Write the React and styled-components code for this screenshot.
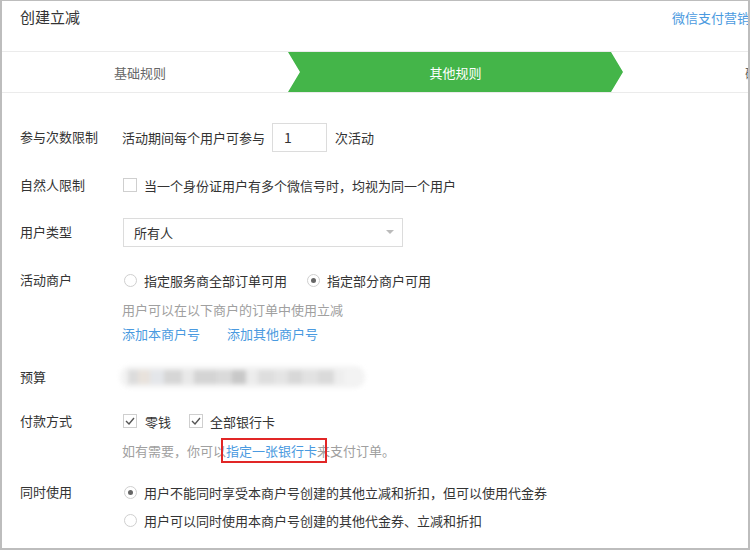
import React from "react";
import styled, { createGlobalStyle } from "styled-components";

const GlobalStyle = createGlobalStyle`
  * { box-sizing: border-box; }
  body {
    margin: 0;
    background: #fff;
    font-family: "Noto Sans CJK SC", "Noto Sans", "Liberation Sans", sans-serif;
    font-size: 13px;
    color: #333;
  }
`;

const Frame = styled.div`
  width: 750px;
  height: 550px;
  overflow: hidden;
  border-top: 1px solid #bdbdbd;
  border-left: 2px solid #bdbdbd;
  border-right: 2px solid #bdbdbd;
  border-bottom: 2px solid #bdbdbd;
  background: #fff;
`;

const Header = styled.div`
  display: grid;
  grid-template-columns: 1fr 76px;
  height: 50px;
  padding: 6px 0 0 18px;
`;

const Title = styled.div`
  font-size: 15px;
  line-height: 20px;
  color: #333;
`;

const HeaderLink = styled.a`
  font-size: 13px;
  line-height: 22px;
  color: #4a9ae0;
  white-space: nowrap;
  overflow: hidden;
  text-decoration: none;
`;

const Steps = styled.div`
  display: flex;
  height: 42px;
  border-top: 1px solid #ebebeb;
  border-bottom: 1px solid #ebebeb;
  overflow: hidden;
`;

const Step = styled.div`
  flex: 0 0 ${(p) => p.$w}px;
  display: flex;
  align-items: center;
  justify-content: center;
  padding-right: ${(p) => p.$pr || 0}px;
  font-size: 13px;
  color: ${(p) => (p.$active ? "#fff" : "#666")};
  background: ${(p) => (p.$active ? "#44b549" : "transparent")};
  clip-path: ${(p) =>
    p.$active
      ? "polygon(0 0, calc(100% - 12px) 0, 100% 50%, calc(100% - 12px) 100%, 0 100%, 12px 50%)"
      : "none"};
  white-space: nowrap;
`;

const Form = styled.div`
  display: flex;
  flex-direction: column;
  padding: 29px 0 0 18px;
`;

const Row = styled.div`
  display: flex;
  align-items: flex-start;
  margin-bottom: ${(p) => p.$mb || 0}px;
`;

const Label = styled.div`
  flex: 0 0 102px;
  line-height: 30px;
  color: #333;
`;

const Body = styled.div`
  display: flex;
  flex-direction: column;
`;

const Line = styled.div`
  display: flex;
  align-items: center;
  height: ${(p) => p.$h || 30}px;
  margin-top: ${(p) => p.$mt || 0}px;
  color: ${(p) => (p.$muted ? "#a0a0a0" : "#333")};
  white-space: nowrap;
`;

const NumInput = styled.div`
  width: 55px;
  height: 29px;
  margin: 0 8px 0 7px;
  border: 1px solid #dcdcdc;
  padding-left: 11px;
  font-size: 14px;
  line-height: 27px;
  color: #333;
`;

const Select = styled.div`
  width: 280px;
  height: 29px;
  margin-left: 1px;
  border: 1px solid #dcdcdc;
  display: flex;
  align-items: center;
  justify-content: space-between;
  padding: 0 8px 0 10px;
  color: #333;
`;

const Caret = styled.span`
  width: 0;
  height: 0;
  border-left: 4px solid transparent;
  border-right: 4px solid transparent;
  border-top: 4px solid #bbb;
`;

const Option = styled.span`
  display: inline-flex;
  align-items: center;
  margin-left: ${(p) => p.$ml || 0}px;
`;

const Box = styled.span`
  width: 14px;
  height: 14px;
  margin: 0 ${(p) => p.$gap || 7}px 0 1px;
  border: 1px solid #cfcfcf;
  background: #fff;
  display: inline-flex;
  align-items: center;
  justify-content: center;
`;

const Radio = styled.span`
  width: 13px;
  height: 13px;
  margin: 0 7px 0 2px;
  border-radius: 50%;
  border: 1px solid #cfcfcf;
  background: #fff;
  display: inline-flex;
  align-items: center;
  justify-content: center;
  &::after {
    content: "";
    width: 5px;
    height: 5px;
    border-radius: 50%;
    background: ${(p) => (p.$on ? "#666" : "transparent")};
  }
`;

const Link = styled.a`
  color: #4a9ae0;
  text-decoration: none;
  margin-right: ${(p) => p.$mr || 0}px;
`;

const Marked = styled.span`
  position: relative;
  color: #4a9ae0;
  &::after {
    content: "";
    position: absolute;
    left: -5px;
    right: -10px;
    top: -3px;
    bottom: -3px;
    border: 2px solid #e12626;
  }
`;

const Blur = styled.div`
  display: flex;
  align-items: center;
  height: 22px;
  margin: 4px 0 0 -2px;
  padding: 0 8px;
  width: 245px;
  background: #f3f3f3;
  border-radius: 10px;
  filter: blur(2px);
`;

const Chip = styled.span`
  height: 14px;
  width: ${(p) => p.$w}px;
  background: ${(p) => p.$c};
`;

const chips = [
  [10, "#dcdcdc"], [12, "#e8e2dc"], [14, "#e4e6ea"], [18, "#d6d6d6"], [12, "#e9e9e9"],
  [22, "#d4d4d4"], [16, "#dadada"], [14, "#c8c8c8"], [12, "#ececec"], [16, "#dedede"],
  [14, "#e4e4e4"], [14, "#d8d8d8"], [16, "#e2e2e2"], [16, "#dadada"], [10, "#eeeeee"],
];

const Check = () => (
  <svg width="10" height="8" viewBox="0 0 10 8">
    <path d="M1 4 L4 7 L9 1" fill="none" stroke="#555" strokeWidth="1.4" />
  </svg>
);

export default function App() {
  return (
    <Frame>
      <GlobalStyle />
      <Header>
        <Title>创建立减</Title>
        <HeaderLink>微信支付营销中心</HeaderLink>
      </Header>
      <Steps>
        <Step $w={286} $pr={10}>基础规则</Step>
        <Step $w={335} $active>其他规则</Step>
        <Step $w={296}>确认信息</Step>
      </Steps>
      <Form>
        <Row $mb={18}>
          <Label>参与次数限制</Label>
          <Line>
            活动期间每个用户可参与
            <NumInput>1</NumInput>
            次活动
          </Line>
        </Row>
        <Row $mb={17}>
          <Label>自然人限制</Label>
          <Line>
            <Option>
              <Box />
              当一个身份证用户有多个微信号时，均视为同一个用户
            </Option>
          </Line>
        </Row>
        <Row $mb={18}>
          <Label>用户类型</Label>
          <Line>
            <Select>
              所有人
              <Caret />
            </Select>
          </Line>
        </Row>
        <Row $mb={17}>
          <Label>活动商户</Label>
          <Body>
            <Line>
              <Option>
                <Radio />
                指定服务商全部订单可用
              </Option>
              <Option $ml={18}>
                <Radio $on />
                指定部分商户可用
              </Option>
            </Line>
            <Line $h={24} $mt={2} $muted>用户可以在以下商户的订单中使用立减</Line>
            <Line $h={24}>
              <Link $mr={27}>添加本商户号</Link>
              <Link>添加其他商户号</Link>
            </Line>
          </Body>
        </Row>
        <Row $mb={14}>
          <Label>预算</Label>
          <Blur>
            {chips.map(([w, c], i) => (
              <Chip key={i} $w={w} $c={c} />
            ))}
          </Blur>
        </Row>
        <Row $mb={15}>
          <Label>付款方式</Label>
          <Body>
            <Line>
              <Option>
                <Box $gap={8}>
                  <Check />
                </Box>
                零钱
              </Option>
              <Option $ml={17}>
                <Box>
                  <Check />
                </Box>
                全部银行卡
              </Option>
            </Line>
            <Line $h={24} $mt={2} $muted>
              如有需要，你可以<Marked>指定一张银行卡</Marked>来支付订单。
            </Line>
          </Body>
        </Row>
        <Row>
          <Label>同时使用</Label>
          <Body>
            <Line>
              <Option>
                <Radio $on />
                用户不能同时享受本商户号创建的其他立减和折扣，但可以使用代金券
              </Option>
            </Line>
            <Line $h={26}>
              <Option>
                <Radio />
                用户可以同时使用本商户号创建的其他代金券、立减和折扣
              </Option>
            </Line>
          </Body>
        </Row>
      </Form>
    </Frame>
  );
}
